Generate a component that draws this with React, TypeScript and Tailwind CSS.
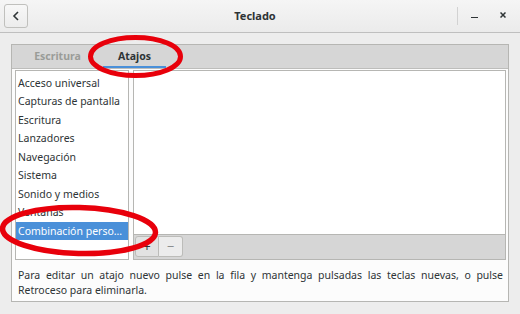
import React from "react";

const items = [
  "Acceso universal",
  "Capturas de pantalla",
  "Escritura",
  "Lanzadores",
  "Navegación",
  "Sistema",
  "Sonido y medios",
  "Ventanas",
  "Combinación perso…",
];

export default function App() {
  return (
    <div className="relative w-[520px] h-[314px] bg-[#ededed] overflow-hidden flex flex-col text-[10.5px] text-[#2e3436] font-['Noto_Sans',sans-serif]">
      {/* Header bar */}
      <div className="h-[33px] shrink-0 grid grid-cols-[1fr_auto_1fr] items-center border-b border-[#bfbfbf] bg-gradient-to-b from-[#f5f5f5] to-[#ebebeb] pl-[4px] pr-[14px]">
        <div className="flex items-center">
          <div className="w-[24px] h-[24px] flex items-center justify-center rounded-[3px] border border-[#c0c0bd] bg-gradient-to-b from-[#f7f7f7] to-[#ececec]">
            <svg width="8" height="10" viewBox="0 0 8 10">
              <path d="M6 1 L2 5 L6 9" fill="none" stroke="#2e3436" strokeWidth="1.6" />
            </svg>
          </div>
        </div>
        <div className="font-bold text-[11px]">Teclado</div>
        <div className="flex items-center justify-end h-full">
          <div className="w-px h-[18px] bg-[#d2d2d2] mr-[13px]" />
          <div className="w-[7px] flex items-center justify-center mr-[22px] mt-[3px]">
            <div className="w-[7px] h-[1.5px] bg-[#2e3436]" />
          </div>
          <svg width="6" height="6" viewBox="0 0 6 6" className="mb-[2px]">
            <path d="M0.5 0.5 L5.5 5.5 M5.5 0.5 L0.5 5.5" stroke="#2e3436" strokeWidth="1.5" />
          </svg>
        </div>
      </div>

      {/* Body */}
      <div className="flex-1 pt-[11px] pl-[11px] pr-[11px] pb-[12px]">
        <div className="h-full flex flex-col border border-[#b6b6b3] bg-[#fcfcfc]">
          {/* Tabs */}
          <div className="h-[24px] shrink-0 flex pl-[7px] gap-[7px] bg-[#d6d6d6] border-b border-[#bdbdbb]">
            <div className="w-[77px] flex items-center justify-center font-bold text-[#9a9c98]">Escritura</div>
            <div className="relative w-[63px] flex items-center justify-center font-bold text-[#2e3436]">
              Atajos
              <div className="absolute left-0 right-0 bottom-0 h-[2px] bg-[#4a90d9]" />
            </div>
          </div>
          {/* Content */}
          <div className="flex-1 flex flex-col pl-[3px] pr-[2px] pt-[1px]">
            <div className="h-[190px] flex gap-[4px]">
              <div className="w-[114px] shrink-0 border border-[#b6b6b3] bg-white pt-[2.5px]">
                {items.map((t, i) => (
                  <div
                    key={t}
                    className={
                      i === items.length - 1
                        ? "h-[18.5px] leading-[18.5px] pl-[2px] whitespace-nowrap bg-[#4a90d9] text-white"
                        : "h-[18.5px] leading-[18.5px] pl-[2px] whitespace-nowrap"
                    }
                  >
                    {t}
                  </div>
                ))}
              </div>
              <div className="flex-1 flex flex-col border border-[#b6b6b3]">
                <div className="flex-1 bg-white" />
                <div className="h-[25px] shrink-0 bg-[#d6d6d6] border-t border-[#b6b6b3] pl-[1px] pt-[1px] flex">
                  <div className="flex h-[21px]">
                    <div className="w-[24px] flex items-center justify-center rounded-l-[3px] border border-[#bcbcb9] bg-[#e2e2e2] text-[#2e3436] text-[13px] leading-none">
                      +
                    </div>
                    <div className="w-[24px] flex items-center justify-center rounded-r-[3px] border border-l-0 border-[#bcbcb9] bg-[#ececec] text-[#8b8e8f] text-[13px] leading-none">
                      −
                    </div>
                  </div>
                </div>
              </div>
            </div>
            <p className="mt-[8px] pl-[3px] pr-[3px] leading-[14.5px] text-justify">
              Para editar un atajo nuevo pulse en la fila y mantenga pulsadas las teclas nuevas, o pulse Retroceso para eliminarla.
            </p>
          </div>
        </div>
      </div>

      {/* Red annotation ellipses */}
      <svg className="absolute inset-0 pointer-events-none" width="520" height="314" viewBox="0 0 520 314">
        <ellipse cx="135.5" cy="56.5" rx="45" ry="19" fill="none" stroke="#e8000b" strokeWidth="5" />
        <ellipse cx="79" cy="230.5" rx="76.5" ry="23" fill="none" stroke="#e8000b" strokeWidth="5.5" transform="rotate(1.5 79 230.5)" />
      </svg>
    </div>
  );
}
